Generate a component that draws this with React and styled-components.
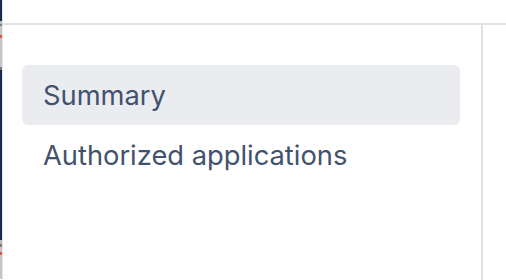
import React from "react"
import styled, { createGlobalStyle } from "styled-components"

const GlobalStyle = createGlobalStyle`
  html, body {
    margin: 0;
    padding: 0;
    background: #fff;
  }
  body {
    font-family: Inter, "Noto Sans", "Liberation Sans", sans-serif;
  }
`

// sliver of the window sitting behind, peeking at the left edge
const edge = [
  { color: "#172b4d", h: 21 },
  { color: "#b9bbbe", h: 3 },
  { color: "#7a7c80", h: 2 },
  { color: "#c4c6c9", h: 9 },
  { color: "#d9534f", h: 3 },
  { color: "#c4c6c9", h: 29 },
  { color: "#7a7c80", h: 3 },
  { color: "#172b4d", h: 170 },
  { color: "#b9bbbe", h: 4 },
  { color: "#7a7c80", h: 3 },
  { color: "#c4c6c9", h: 5 },
  { color: "#d9534f", h: 3 },
  { color: "#c4c6c9", h: 24 },
]

const items = [
  { label: "Summary", active: true },
  { label: "Authorized applications", active: false },
]

const App = () => {
  return (
    <>
      <GlobalStyle />
      <Page>
        <Edge>
          {edge.map((s, i) => (
            <EdgeBit key={i} $color={s.color} $h={s.h} />
          ))}
        </Edge>
        <Main>
          <TopBar />
          <Body>
            <Sidebar>
              <NavList>
                {items.map((it) => (
                  <NavItem key={it.label} $active={it.active}>
                    {it.label}
                  </NavItem>
                ))}
              </NavList>
            </Sidebar>
            <Content />
          </Body>
        </Main>
      </Page>
    </>
  )
}

export default App

const Page = styled.div`
  display: flex;
  width: 506px;
  height: 280px;
  overflow: hidden;
  background: #fff;
`

const Edge = styled.div`
  display: flex;
  flex-direction: column;
  width: 2px;
  flex-shrink: 0;
  border-right: 1px solid #e4e5e7;
`

const EdgeBit = styled.div`
  height: ${(p) => p.$h}px;
  background: ${(p) => p.$color};
  flex-shrink: 0;
`

const Main = styled.div`
  flex: 1;
  display: flex;
  flex-direction: column;
  min-width: 0;
`

const TopBar = styled.div`
  height: 23px;
  border-bottom: 2px solid #dfe1e6;
  flex-shrink: 0;
`

const Body = styled.div`
  flex: 1;
  display: flex;
`

const Sidebar = styled.div`
  width: 438px;
  padding: 40px 21px 0 19px;
  border-right: 2px solid #dfe1e6;
  flex-shrink: 0;
`

const NavList = styled.div`
  display: flex;
  flex-direction: column;
`

const NavItem = styled.div`
  height: 60px;
  display: flex;
  align-items: center;
  padding: 0 20px 0 21px;
  border-radius: 6px;
  background: ${(p) => (p.$active ? "#ebecf0" : "transparent")};
  color: #42526e;
  font-size: 27.3px;
  white-space: nowrap;
`

const Content = styled.div`
  flex: 1;
`
